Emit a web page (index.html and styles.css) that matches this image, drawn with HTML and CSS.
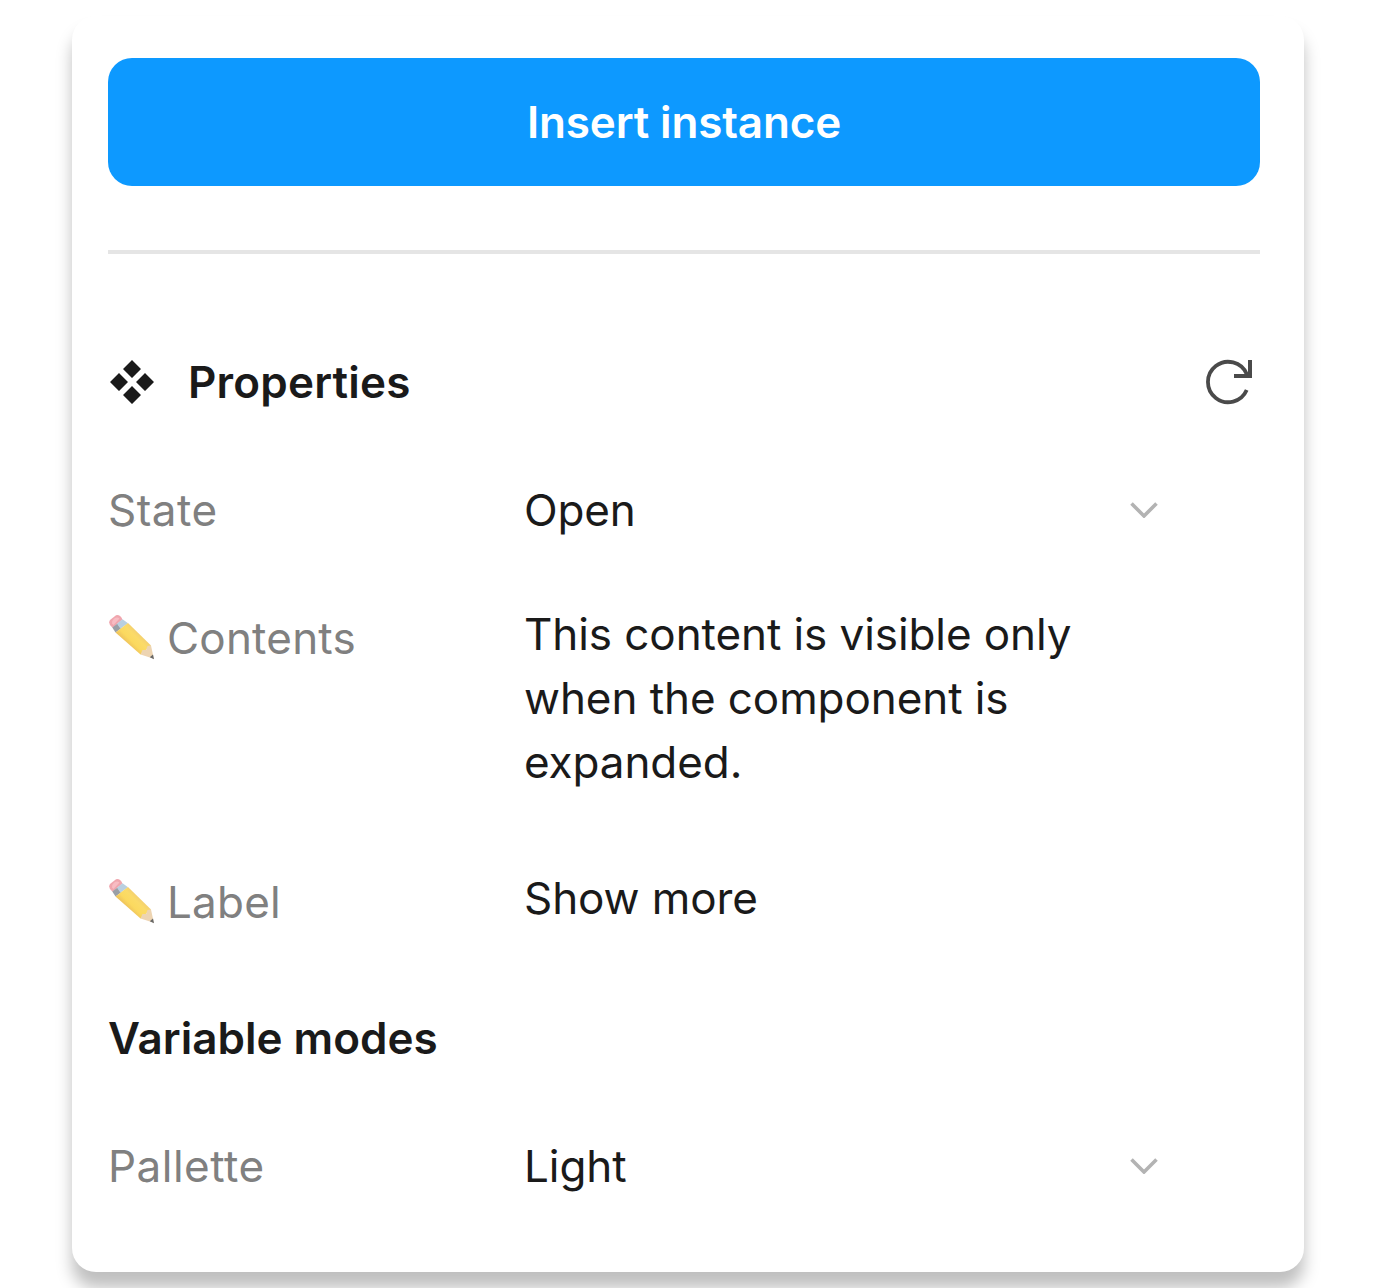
FILE: index.html
```html
<!DOCTYPE html>
<html lang="en">
<head>
<meta charset="utf-8">
<title>Component properties</title>
<link rel="stylesheet" href="styles.css">
</head>
<body>
<main class="panel">
  <button class="insert" type="button">Insert instance</button>
  <hr class="divider">
  <header class="section-head">
    <svg class="component-icon" viewBox="0 0 48 48" aria-hidden="true">
      <path d="M24 2l9 9-9 9-9-9zM11 15l9 9-9 9-9-9zM37 15l9 9-9 9-9-9zM24 28l9 9-9 9-9-9z"/>
    </svg>
    <h2 class="title properties">Properties</h2>
    <svg class="reset-icon" viewBox="0 0 48 48" aria-hidden="true">
      <path d="M42 18.500L40.700 16A20.200 20.200 0 1 0 40.700 32"/>
      <path class="arrow" d="M44 2V18H28"/>
    </svg>
  </header>
  <div class="row row-state">
    <span class="name">State</span>
    <span class="value">Open</span>
    <svg class="chevron" viewBox="0 0 28 16" aria-hidden="true"><path d="M1.500 1.500L14 14L26.500 1.500"/></svg>
  </div>
  <div class="row row-contents">
    <span class="name">
      <svg class="pencil" viewBox="0 0 48 48" aria-hidden="true"><use href="#pencil-art"/></svg>Contents</span>
    <span class="value">This content is visible only when the component is expanded.</span>
  </div>
  <div class="row row-label">
    <span class="name">
      <svg class="pencil" viewBox="0 0 48 48" aria-hidden="true"><use href="#pencil-art"/></svg>Label</span>
    <span class="value">Show more</span>
  </div>
  <h2 class="title modes">Variable modes</h2>
  <div class="row row-palette">
    <span class="name">Pallette</span>
    <span class="value">Light</span>
    <svg class="chevron" viewBox="0 0 28 16" aria-hidden="true"><path d="M1.500 1.500L14 14L26.500 1.500"/></svg>
  </div>
</main>
<svg class="defs" aria-hidden="true">
  <defs>
    <linearGradient id="wood" gradientUnits="userSpaceOnUse" x1="20" y1="30" x2="31" y2="19">
      <stop offset="0" stop-color="#efc45c"/>
      <stop offset="0.300" stop-color="#fbd95f"/>
      <stop offset="0.700" stop-color="#fbdb68"/>
      <stop offset="1" stop-color="#f3cf70"/>
    </linearGradient>
    <g id="pencil-art">
      <path fill="#f0a6ae" d="M4.500 13.800Q-.5 9.500 2 6L8 1.200Q12 .2 14.500 5.500z"/>
      <path fill="#f8bcc3" d="M4 9.500Q3.500 7 6 4.800Q9 2.500 11.500 4.500L5.500 11z"/>
      <path fill="#9a9fa6" d="M4.300 13.500L9.500 9.500L13 14.500L7.500 18.500z"/>
      <path fill="#b9cfe0" d="M9 9.800L14.500 5.300L20 9.300L12.500 14.800z"/>
      <path fill="url(#wood)" d="M7.500 18.500L20 9L43 31.500L32.500 40.500z"/>
      <path fill="#edd4b2" d="M32.500 40.500L34.500 36L38 36L39.500 32L43 31.500L45.800 44.800z"/>
      <path fill="#686868" d="M41.800 43.300L45 40.500L46 45.200z"/>
    </g>
  </defs>
</svg>
</body>
</html>
```

FILE: styles.css
```css
* { box-sizing: border-box; }

body {
  margin: 0;
  height: 1288px;
  padding: 16px 72px;
  overflow: hidden;
  background: #fff;
  color: #1a1a1a;
  font-family: Inter, "Liberation Sans", sans-serif;
  font-size: 44px;
  line-height: 64px;
  letter-spacing: -0.08px;
}

.panel {
  display: flex;
  flex-direction: column;
  height: 1256px;
  padding: 42px 44px 0 36px;
  border-radius: 24px;
  background: #fff;
  box-shadow: 0 16px 16px rgba(0, 0, 0, 0.25);
}

.insert {
  height: 128px;
  padding: 0;
  border: 0;
  border-radius: 24px;
  background: #0d99ff;
  color: #fff;
  font: inherit;
  font-weight: 600;
  letter-spacing: -0.15px;
}

.divider {
  width: 100%;
  height: 4px;
  margin: 64px 0 96px;
  border: 0;
  background: #e5e5e5;
}

.section-head {
  display: flex;
  align-items: center;
  height: 64px;
}

.title {
  margin: 0;
  font-size: 44px;
  font-weight: 600;
  letter-spacing: 0;
}

.properties { letter-spacing: 0.2px; }

.component-icon {
  width: 48px;
  height: 48px;
  margin-right: 32px;
  fill: #1a1a1a;
}

.reset-icon {
  width: 48px;
  height: 48px;
  margin: 0 6px 0 auto;
  fill: none;
  stroke: #4a4a4a;
  stroke-width: 3.8;
}

.reset-icon .arrow { stroke-width: 4; }

.row {
  display: grid;
  grid-template-columns: 416px 560px 1fr;
  align-items: start;
}

.row-state { margin-top: 64px; }
.row-contents { margin-top: 60px; }
.row-label { margin-top: 72px; }
.modes { margin-top: 72px; }
.row-palette { margin-top: 64px; }

.name {
  display: flex;
  align-items: center;
  color: #808080;
  letter-spacing: 0.5px;
}

.row-contents .name,
.row-label .name {
  padding-top: 4px;
  letter-spacing: 0.2px;
}

.row-state .value { letter-spacing: -0.2px; }

.pencil {
  width: 48px;
  height: 48px;
  margin-right: 11px;
}

.chevron {
  align-self: center;
  justify-self: end;
  width: 28px;
  height: 16px;
  margin-right: 102px;
  fill: none;
  stroke: #b3b3b3;
  stroke-width: 3.6;
}

.defs {
  display: block;
  width: 0;
  height: 0;
}
```
